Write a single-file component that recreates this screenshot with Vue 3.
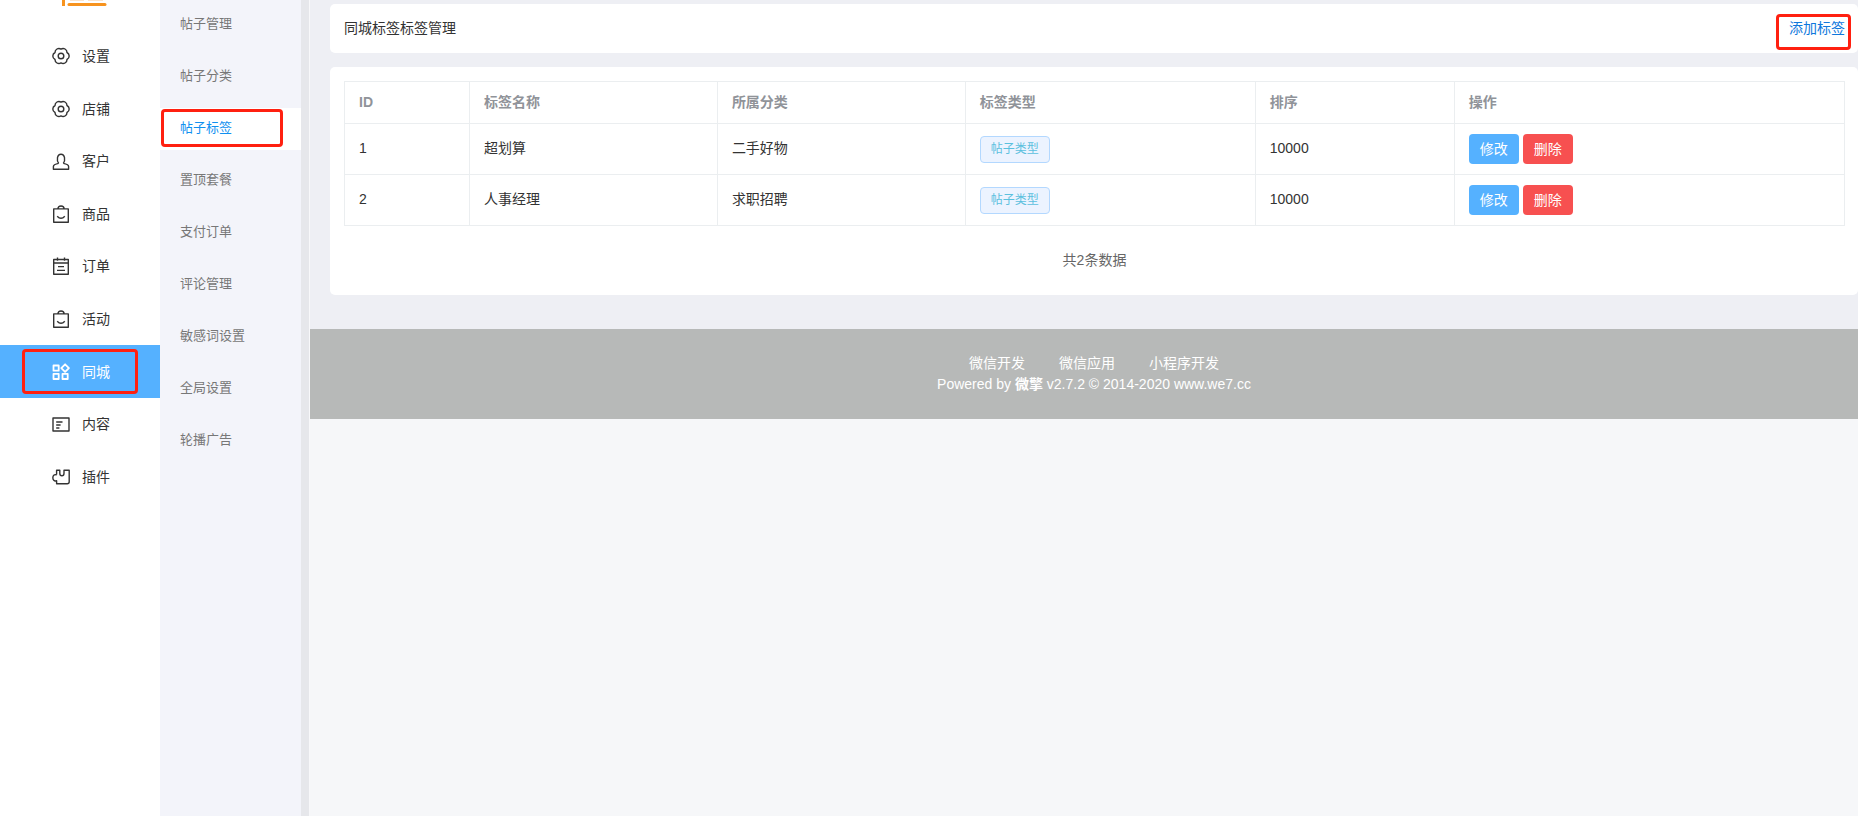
<script setup>
const navItems = [
  { label: '设置', icon: 'gear' },
  { label: '店铺', icon: 'gear' },
  { label: '客户', icon: 'user' },
  { label: '商品', icon: 'bag' },
  { label: '订单', icon: 'order' },
  { label: '活动', icon: 'bag' },
  { label: '同城', icon: 'grid', active: true },
  { label: '内容', icon: 'content' },
  { label: '插件', icon: 'plugin' }
]

const subItems = ['帖子管理', '帖子分类', '帖子标签', '置顶套餐', '支付订单', '评论管理', '敏感词设置', '全局设置', '轮播广告']
const activeSub = '帖子标签'

const columns = ['ID', '标签名称', '所属分类', '标签类型', '排序', '操作']
const rows = [
  { id: 1, name: '超划算', category: '二手好物', type: '帖子类型', sort: 10000 },
  { id: 2, name: '人事经理', category: '求职招聘', type: '帖子类型', sort: 10000 }
]
const footerLinks = ['微信开发', '微信应用', '小程序开发']
</script>

<template>
  <div class="layout">
    <aside class="sidebar">
      <svg class="logo" width="46" height="7" viewBox="0 0 46 7" aria-hidden="true">
        <path d="M2.5 0v6" stroke="#f7931e" stroke-width="3" />
        <path d="M8 4.5h36" stroke="#f7931e" stroke-width="3" stroke-linecap="round" />
        <path d="M9 .5h14M27 .5h15" stroke="#fbe3cb" stroke-width="1" />
      </svg>
      <nav class="nav">
        <a v-for="item in navItems" :key="item.label" href="#" class="nav-item" :class="{ active: item.active }">
          <svg class="icon" width="18" height="18" viewBox="0 0 18 18" fill="none" stroke="currentColor" stroke-width="1.4" stroke-linejoin="round" aria-hidden="true">
            <template v-if="item.icon === 'gear'">
              <path d="M9 2.1A3.9 3.9 0 0 1 15 5.5A3.9 3.9 0 0 1 15 12.5A3.9 3.9 0 0 1 9 15.9A3.9 3.9 0 0 1 3 12.5A3.9 3.9 0 0 1 3 5.5A3.9 3.9 0 0 1 9 2.1Z" />
              <circle cx="9" cy="9" r="2.8" />
            </template>
            <template v-else-if="item.icon === 'user'">
              <path d="M6.7 11.4C4.4 8.4 5 2.2 9 2.2s4.6 6.2 2.3 9.2M6.7 11.4c-3.6.7-5.3 1.2-5.3 3.2v2.6h15.2v-2.6c0-2-1.7-2.5-5.3-3.2" />
            </template>
            <template v-else-if="item.icon === 'bag'">
              <path d="M1.7 3.9h14.6v13.3H1.7zM5.9 3.9C5.9 2 7 1 9 1s3.1 1 3.1 2.9M5.2 11.2q3.8 4.2 7.6 0" />
            </template>
            <template v-else-if="item.icon === 'order'">
              <path d="M1.7 2.5h14.6v14.8H1.7zM1.7 6h14.6M5.5.6v3.2M12.5.6v3.2M6 9.6h6M5 13.4h8" />
            </template>
            <template v-else-if="item.icon === 'grid'">
              <path d="M1.5 2.5h5.2v5.2H1.5zM1.5 10.8h5.2V16H1.5zM10.5 10.8h5.2V16h-5.2zM13.1 1.3l3.8 3.8-3.8 3.8-3.8-3.8z" stroke-width="1.8" />
            </template>
            <template v-else-if="item.icon === 'content'">
              <path d="M1 3h16v13H1zM4.2 7h6.3M4.2 10h4.4M4.2 13h3.2" />
            </template>
            <template v-else>
              <path d="M4.6 6.5V2.2h3.2v3c0 3.4 4.2 3.4 4.2 0v-3h5.2v11.6q0 2-2 2H4.6v-3.1C-.4 14.6-.4 4.8 4.6 7" />
            </template>
          </svg>
          <span>{{ item.label }}</span>
          <i v-if="item.active" class="mark mark-nav"></i>
        </a>
      </nav>
    </aside>

    <nav class="subnav">
      <a v-for="label in subItems" :key="label" href="#" class="sub-item" :class="{ active: label === activeSub }">
        {{ label }}
        <i v-if="label === activeSub" class="mark mark-sub"></i>
      </a>
    </nav>

    <div class="page">
      <main class="content">
        <header class="card title-card">
          <span>同城标签标签管理</span>
          <a href="#" class="add-link">添加标签<i class="mark mark-add"></i></a>
        </header>
        <section class="card table-card">
          <table>
            <colgroup>
              <col class="c-id" /><col class="c-name" /><col class="c-name" /><col class="c-type" /><col class="c-sort" /><col />
            </colgroup>
            <thead>
              <tr><th v-for="c in columns" :key="c" scope="col">{{ c }}</th></tr>
            </thead>
            <tbody>
              <tr v-for="row in rows" :key="row.id">
                <td>{{ row.id }}</td>
                <td>{{ row.name }}</td>
                <td>{{ row.category }}</td>
                <td class="boxed-cell"><span class="tag">{{ row.type }}</span></td>
                <td>{{ row.sort }}</td>
                <td class="boxed-cell">
                  <div class="actions">
                    <button type="button" class="btn edit">修改</button>
                    <button type="button" class="btn remove">删除</button>
                  </div>
                </td>
              </tr>
            </tbody>
          </table>
          <p class="total">共2条数据</p>
        </section>
      </main>
      <footer class="footer">
        <div class="links">
          <a v-for="link in footerLinks" :key="link" href="#">{{ link }}</a>
        </div>
        <div>Powered by <b>微擎</b> v2.7.2 © 2014-2020 www.we7.cc</div>
      </footer>
    </div>
  </div>
</template>

<style>
body {
  margin: 0;
  background: #f6f7f9;
}
</style>

<style scoped>
.layout {
  display: flex;
  min-height: 100vh;
  color: #333;
  font: 14px/20px "Liberation Sans", "Noto Sans CJK SC", sans-serif;
}
a {
  color: inherit;
  text-decoration: none;
}
.sidebar {
  flex: 0 0 160px;
  background: #fff;
}
.logo {
  display: block;
  margin: 0 0 23px 61px;
}
.nav {
  display: grid;
  grid-template-rows: repeat(9, 1fr);
  height: 473px;
}
.nav-item {
  position: relative;
  display: flex;
  align-items: center;
  gap: 12px;
  padding-left: 52px;
}
.nav-item.active {
  background: #55b1ff;
  color: #fff;
}
.icon {
  flex: none;
}
.subnav {
  box-sizing: border-box;
  flex: 0 0 150px;
  display: flex;
  flex-direction: column;
  gap: 10px;
  padding-top: 4px;
  background: #f3f4fa;
  border-right: 1px solid #f8f8fa;
  box-shadow: inset -8px 0 #e6e7eb;
  font-size: 13px;
}
.sub-item {
  position: relative;
  margin-right: 8px;
  padding: 0 0 2px 20px;
  color: #777;
  line-height: 40px;
}
.sub-item.active {
  background: #fff;
  color: #1090f0;
}
.mark {
  position: absolute;
  border: 3px solid #ff2010;
  border-radius: 4px;
  pointer-events: none;
}
.mark-nav {
  inset: 4px 22px;
}
.mark-sub {
  inset: 1px 18px 3px 1px;
}
.mark-add {
  inset: -4px -6px -12px -13px;
}
.page {
  flex: 1;
  min-width: 0;
}
.content {
  padding: 4px 0 34px 20px;
  background: #eeeff4;
}
.card {
  background: #fff;
  border-radius: 5px;
}
.title-card {
  display: flex;
  justify-content: space-between;
  padding: 14px 13px 15px 14px;
}
.add-link {
  position: relative;
  color: #0f78dc;
}
.table-card {
  margin-top: 14px;
  padding: 14px 13px 25px 14px;
}
table {
  width: 100%;
  table-layout: fixed;
  border-collapse: collapse;
}
.c-id {
  width: 8.33%;
}
.c-name {
  width: 16.53%;
}
.c-type {
  width: 19.33%;
}
.c-sort {
  width: 13.27%;
}
th,
td {
  box-sizing: border-box;
  padding: 0 14px 2px;
  border: 1px solid #ebeef0;
  text-align: left;
}
th {
  height: 42px;
  color: #909399;
}
td {
  height: 51px;
}
.boxed-cell {
  padding-bottom: 0;
}
.tag {
  display: block;
  box-sizing: border-box;
  width: max-content;
  padding: 0 10px;
  border: 1px solid #b3d8ff;
  border-radius: 4px;
  background: #ecf3ff;
  color: #5bc0de;
  font-size: 12px;
  line-height: 25px;
}
.actions {
  display: flex;
  gap: 4px;
}
.btn {
  width: 50px;
  height: 30px;
  padding: 0;
  border: 0;
  border-radius: 4px;
  color: #fff;
  font: inherit;
}
.edit {
  background: #55b1ff;
}
.remove {
  background: #f75050;
}
.total {
  margin: 24px 0 0;
  color: #666;
  text-align: center;
}
.footer {
  padding: 24px 0 24px 20px;
  background: #b7b9b8;
  color: #fff;
  line-height: 21px;
  text-align: center;
}
.links {
  display: flex;
  justify-content: center;
  gap: 34px;
}
</style>
